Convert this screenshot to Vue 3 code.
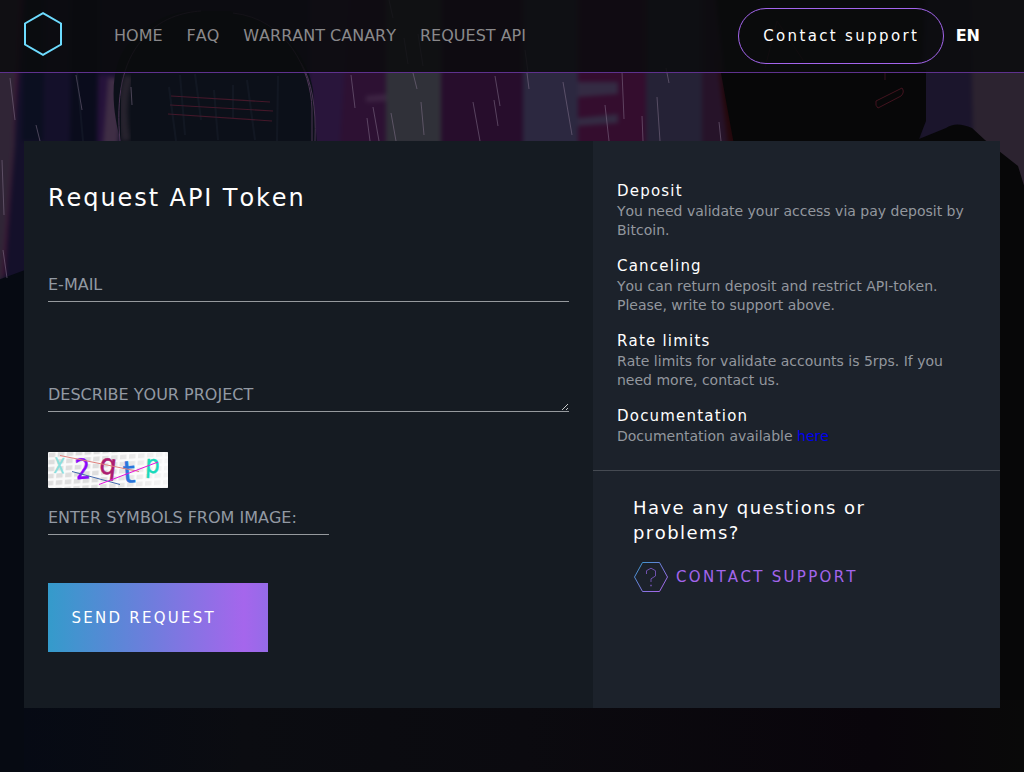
<script setup>
const nav = ['HOME', 'FAQ', 'WARRANT CANARY', 'REQUEST API']
const notes = [
  { title: 'Deposit', text: 'You need validate your access via pay deposit by Bitcoin.' },
  { title: 'Canceling', text: 'You can return deposit and restrict API-token. Please, write to support above.' },
  { title: 'Rate limits', text: 'Rate limits for validate accounts is 5rps. If you need more, contact us.' },
  { title: 'Documentation', text: 'Documentation available ', link: 'here' }
]
const rain = [
  [10, 78, 15, 120], [2, 160, 4, 215], [3, 250, 7, 278], [36, 125, 40, 141], [76, 75, 82, 110], [131, 87, 132, 105],
  [351, 75, 355, 108], [367, 118, 370, 141], [373, 107, 379, 141], [413, 73, 417, 89], [421, 102, 424, 135],
  [391, 113, 396, 141], [473, 102, 480, 141], [495, 76, 500, 106], [494, 100, 498, 126], [527, 73, 529, 89],
  [563, 82, 572, 135], [605, 105, 609, 141], [622, 72, 624, 119], [642, 116, 643, 141], [657, 97, 660, 141],
  [666, 68, 669, 83], [389, 0, 393, 18], [404, 38, 408, 64], [418, 34, 423, 66], [525, 50, 528, 72],
  [719, 122, 721, 141]
]
</script>

<template>
  <div class="page">
    <svg class="scene" viewBox="0 0 1024 772" preserveAspectRatio="none" aria-hidden="true">
      <defs>
        <linearGradient id="ground"><stop offset="0" stop-color="#060a14" /><stop offset=".22" stop-color="#0b0c11" /><stop offset=".5" stop-color="#0b0a0f" /><stop offset=".85" stop-color="#09050b" /><stop offset="1" stop-color="#090909" /></linearGradient>
        <filter id="soft" x="-20%" y="-20%" width="140%" height="140%" color-interpolation-filters="sRGB"><feGaussianBlur stdDeviation="2" /></filter>
        <filter id="edge" x="-20%" y="-20%" width="140%" height="140%" color-interpolation-filters="sRGB"><feGaussianBlur stdDeviation=".6" /></filter>
      </defs>
      <rect width="1024" height="772" fill="url(#ground)" />
      <g filter="url(#soft)">
        <path d="M-10-10H320V285H-10z" fill="#14102a" />
        <path d="M-10-10H20L15 145 4 277-10 290z" fill="#302536" />
        <path d="M19-10H24L10 200 5 276H2L13 145z" fill="#401335" />
        <path d="M25-10H45L43 141H22z" fill="#0b0f20" />
        <path d="M72-10H98V145H70z" fill="#0a0c1c" />
        <path d="M98 75H115L112 145H97z" fill="#25123a" />
        <path d="M108 78H123L118 145H103z" fill="#3f2e45" />
        <path d="M309-10H388V145H309z" fill="#29153b" />
        <path d="M350-10H388V145H340z" fill="#2d1133" />
        <path d="M386-10H441V145H386z" fill="#303139" />
        <path d="M441-10H523V145H441z" fill="#270d2c" />
        <path d="M523-10H578V145H523z" fill="#2c2840" />
        <path d="M578-10H648V145H578z" fill="#340d2e" />
        <path d="M578 82L618 82V94L578 97zM578 118L618 114V123L578 126z" fill="#342b43" />
        <path d="M366 96L386 94V101L366 102z" fill="#3d2443" />
        <path d="M646-10H704V145H646z" fill="#252236" />
        <path d="M702-10H735V145H702z" fill="#261329" />
        <path d="M715-10L732 145H930V-10z" fill="#080709" />
        <path d="M716 50L721 70 737 145H728z" fill="#25080c" />
        <path d="M926-10H974V145H918z" fill="#1b152c" />
        <path d="M970-10H1040V230H975z" fill="#2c2330" />
      </g>
      <path d="M122 145C108 100 112 60 130 42Q158 12 192 11H230C276 20 307 50 313 90L317 145z" fill="#0c1019" filter="url(#edge)" />
      <path d="M120 141C116 98 122 63 142 40 159 18 184 12 201 11M233 13C287 19 311 70 312 109V141M301 63Q317 90 315 141" fill="none" stroke="#4b3555" stroke-width="1" />
      <path d="M129 76Q119 104 126 141" fill="none" stroke="#27232e" stroke-width="9" filter="url(#soft)" />
      <path d="M171 96L270 102M170 105L273 111M168 114L272 121" stroke="#45182a" stroke-width="1.1" />
      <path d="M-5 281L25 270V782H-5z" fill="#060a12" filter="url(#edge)" />
      <path d="M926 70V121L919 139 946 128Q956 121 972 128L985 140 1018 166 1026 192V780H920V150H735L721 73z" fill="#070708" filter="url(#edge)" />
      <rect x="24" y="700" width="1000" height="72" fill="url(#ground)" />
      <path d="M876 101L902 88Q905 92 901 96L878 108Q875 106 876 101z" fill="none" stroke="#42131e" />
      <path d="M885 72V80M765 68L777 21 803 60" fill="none" stroke="#35131e" />
      <g stroke="#897892" stroke-width="1" opacity=".5"><line v-for="(r, i) in rain" :key="i" :x1="r[0]" :y1="r[1]" :x2="r[2]" :y2="r[3]" /></g>
      <g stroke="#232c3a" stroke-width="2" opacity=".28" filter="url(#edge)"><path d="M169 87L176 141M180 75L185 135M195 74L201 120M214 90L218 140M233 85V118M247 80L255 140M278 76L277 141M77 72L83 141" /></g>
    </svg>

    <header class="topbar">
      <svg class="logo" viewBox="0 0 38 44"><path d="M19 1.2L37 11.5V32.5L19 42.8 1 32.5V11.5z" fill="none" stroke="#6ddcff" stroke-width="2" /></svg>
      <nav><a v-for="item in nav" :key="item">{{ item }}</a></nav>
      <button class="pill">Contact support</button>
      <strong class="lang">EN</strong>
    </header>

    <main class="card">
      <form class="request" @submit.prevent>
        <h1>Request API Token</h1>
        <input class="field email" placeholder="E-MAIL">
        <div class="area">
          <span>DESCRIBE YOUR PROJECT</span>
          <svg viewBox="0 0 8 8"><path d="M1 7L7 1M5 7L7 5" stroke="#c5c7c9" stroke-width="1" /></svg>
        </div>
        <svg class="captcha" viewBox="0 0 120 36">
          <defs><pattern id="mesh" width="9" height="7" patternUnits="userSpaceOnUse" patternTransform="rotate(-4) skewX(-8)"><rect width="9" height="7" fill="#fafafa" /><rect x="1" y="1" width="6.5" height="4.5" fill="#dedede" /></pattern>
            <linearGradient id="fade"><stop offset=".45" stop-color="#fff" stop-opacity="0" /><stop offset="1" stop-color="#fff" stop-opacity=".75" /></linearGradient></defs>
          <rect width="120" height="36" rx="1" fill="url(#mesh)" />
          <rect width="120" height="36" rx="1" fill="url(#fade)" />
          <g class="glyphs">
            <text transform="translate(5 21) rotate(3) scale(.68 1)" font-size="29" fill="#8ddfdc">x</text>
            <text transform="translate(28 27.5) rotate(-5) scale(.86 1)" font-size="28" fill="#8b08fa" stroke="#8b08fa">2</text>
            <text transform="translate(50.5 21) rotate(7) scale(.98 1)" font-size="28" fill="#ad1c70" stroke="#ad1c70">q</text>
            <text transform="translate(75.5 31) rotate(-4) scale(1.05 1)" font-size="30" fill="#2b75db" stroke="#2b75db">t</text>
            <text transform="translate(97 20.5) rotate(3) scale(.9 1)" font-size="25" fill="#18dabb" stroke="#18dabb">p</text>
          </g>
          <path d="M12 3.5L91 19.5" stroke="#df817d" /><path d="M24 19.5L72 32.5" stroke="#4269ac" /><path d="M51 32.5L110 10" stroke="#e412dc" />
        </svg>
        <input class="field code" placeholder="ENTER SYMBOLS FROM IMAGE:">
        <button class="send">SEND REQUEST</button>
      </form>
      <aside>
        <div class="notes">
          <section v-for="note in notes" :key="note.title">
            <h2>{{ note.title }}</h2>
            <p>{{ note.text }}<a v-if="note.link" class="here">{{ note.link }}</a></p>
          </section>
        </div>
        <div class="help">
          <h3>Have any questions or problems?</h3>
          <a class="support">
            <svg viewBox="0 0 36 32"><defs><linearGradient id="hex" x1="0" y1="0" x2="1" y2="1"><stop offset="0" stop-color="#349aca" /><stop offset=".85" stop-color="#a068e8" /></linearGradient></defs>
              <path d="M9.5 1.5H26.5L34.5 16 26.5 30.5H9.5L1.5 16z" fill="none" stroke="url(#hex)" />
              <path d="M13.5 13V9.7L18 7.2 22.5 9.7V15L18 17.8V21" fill="none" stroke="#7052af" /><path d="M17.2 24.5H18.8" stroke="#7052af" stroke-width="1.5" /></svg>
            <span>CONTACT SUPPORT</span>
          </a>
        </div>
      </aside>
    </main>
  </div>
</template>

<style>
body { background: #090a0e; overflow: hidden; }
</style>

<style scoped>
* { box-sizing: border-box; }
.page { position: relative; height: 772px; overflow: hidden; font-family: "DejaVu Sans", sans-serif; color: #fff; font-kerning: none; }
.scene { position: absolute; inset: 0; width: 100%; height: 100%; }
h1, h2, h3, p { margin: 0; font-weight: 400; }
button, input { font-family: inherit; font-kerning: none; }
.topbar { position: relative; display: flex; align-items: center; height: 73px; padding: 0 44px 1px 24px; background: rgba(10, 12, 13, .85); border-bottom: 1px solid #5e318e; }
.logo { width: 38px; height: 44px; margin: -4px 52px 0 0; }
nav { display: flex; gap: 24px; font-size: 16px; color: #8a898b; white-space: nowrap; }
.pill { width: 206px; height: 56px; margin-left: auto; padding: 0 0 0 1px; border: 1px solid #a365ec; border-radius: 28px; background: transparent; color: #fff; font-size: 15px; letter-spacing: 2.35px; }
.lang { margin-left: 12px; font-size: 16px; }
.card { position: relative; display: grid; grid-template-columns: 569px 407px; height: 567px; margin: 68px 24px 0; }
.request { display: flex; flex-direction: column; align-items: flex-start; padding: 42px 24px 0; background: #151b22; }
h1 { font-size: 24px; line-height: 30px; letter-spacing: 1.92px; }
.field { border: 0; border-bottom: 1px solid #969a9e; padding: 0; border-radius: 0; background: transparent; outline: 0; font-size: 16px; }
.field::placeholder { color: #9299a3; opacity: 1; }
.email { width: 521px; height: 35px; margin-top: 54px; }
.area { position: relative; width: 521px; height: 35px; margin-top: 75px; border-bottom: 1px solid #969a9e; font-size: 16px; line-height: 35px; color: #9299a3; }
.area svg { position: absolute; right: 0; bottom: 0; width: 8px; height: 8px; }
.captcha { width: 120px; height: 36px; margin-top: 40px; overflow: visible; }
.glyphs { font-family: "DejaVu Sans", sans-serif; stroke-width: .5; }
.code { width: 281px; height: 35px; margin-top: 12px; }
.send { width: 220px; height: 69px; margin-top: 48px; padding: 0 0 0 23.5px; border: 0; color: #fff; text-align: left; font-size: 15px; letter-spacing: 2.25px; background: linear-gradient(90deg, #349bcb, #6c7edc 45%, #a566ec 89%, #956be8); }
aside { background: #1c222b; }
.notes { height: 330px; padding: 40px 24px 0; border-bottom: 1px solid #454a52; }
section { height: 75px; }
h2 { font-size: 15px; line-height: 20px; letter-spacing: 1.2px; margin-bottom: 1px; }
p { font-size: 14px; line-height: 19px; color: #93979e; }
.here { color: #0000ee; }
.help { padding: 24px 40px 0; }
h3 { font-size: 18px; line-height: 25px; letter-spacing: 1.44px; }
.support { display: flex; align-items: center; gap: 7px; margin-top: 16px; color: #a365ec; font-size: 15px; letter-spacing: 2.3px; }
.support svg { width: 36px; height: 32px; }
</style>
